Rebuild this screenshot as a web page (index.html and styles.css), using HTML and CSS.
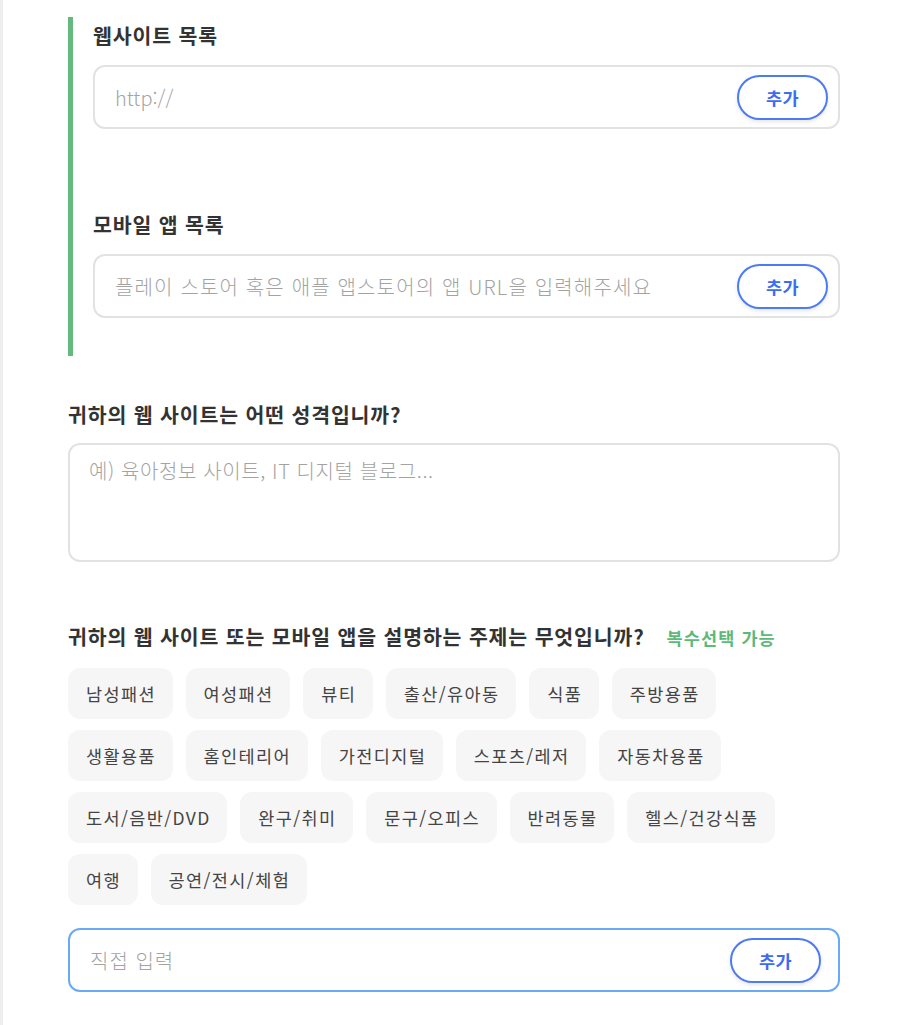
FILE: index.html
```html
<!DOCTYPE html>
<html lang="ko">
<head>
<meta charset="utf-8">
<title>사이트 정보</title>
<link rel="stylesheet" href="styles.css">
</head>
<body>
<div class="page">
  <section class="lists">
    <div class="field-group">
      <h2 class="title">웹사이트 목록</h2>
      <div class="url-field">
        <input class="url-input url-latin" type="text" placeholder="http://">
        <button class="add-btn" type="button">추가</button>
      </div>
    </div>
    <div class="field-group">
      <h2 class="title">모바일 앱 목록</h2>
      <div class="url-field">
        <input class="url-input" type="text" placeholder="플레이 스토어 혹은 애플 앱스토어의 앱 URL을 입력해주세요">
        <button class="add-btn" type="button">추가</button>
      </div>
    </div>
  </section>

  <section class="question q-nature">
    <h2 class="title">귀하의 웹 사이트는 어떤 성격입니까?</h2>
    <textarea class="nature-input" placeholder="예) 육아정보 사이트, IT 디지털 블로그..."></textarea>
  </section>

  <section class="question q-topic">
    <h2 class="title">귀하의 웹 사이트 또는 모바일 앱을 설명하는 주제는 무엇입니까?<span class="multi">복수선택 가능</span></h2>
    <div class="chips">
      <span class="chip">남성패션</span>
      <span class="chip">여성패션</span>
      <span class="chip">뷰티</span>
      <span class="chip">출산/유아동</span>
      <span class="chip">식품</span>
      <span class="chip">주방용품</span>
      <span class="chip">생활용품</span>
      <span class="chip">홈인테리어</span>
      <span class="chip">가전디지털</span>
      <span class="chip">스포츠/레저</span>
      <span class="chip">자동차용품</span>
      <span class="chip">도서/음반/DVD</span>
      <span class="chip">완구/취미</span>
      <span class="chip">문구/오피스</span>
      <span class="chip">반려동물</span>
      <span class="chip">헬스/건강식품</span>
      <span class="chip">여행</span>
      <span class="chip">공연/전시/체험</span>
    </div>
    <div class="url-field direct-field">
      <input class="url-input direct-input" type="text" placeholder="직접 입력">
      <button class="add-btn" type="button">추가</button>
    </div>
  </section>
</div>
</body>
</html>
```

FILE: styles.css
```css
html, body {
  margin: 0;
  padding: 0;
  background: #ffffff;
}

body {
  font-family: "Noto Sans CJK KR", "Noto Sans", sans-serif;
  color: #333333;
}

.page {
  border-left: 3px solid #eeeeee;
  min-height: 1025px;
  box-sizing: border-box;
  padding: 17px 62px 0 65px;
}

.title {
  margin: 0 0 15px 0;
  font-size: 20.5px;
  line-height: 30px;
  font-weight: 700;
  color: #333333;
  letter-spacing: 0.85px;
}

.lists {
  border-left: 5px solid #64b97d;
  padding: 3px 0 38px 20px;
}

.field-group + .field-group {
  margin-top: 80px;
}

.url-field {
  display: flex;
  align-items: center;
  height: 64px;
  box-sizing: border-box;
  border: 2px solid #e2e2e2;
  border-radius: 12px;
  padding: 0 10px 0 20px;
  background: #ffffff;
}

.url-input {
  flex: 1;
  min-width: 0;
  border: none;
  outline: none;
  padding: 0;
  background: transparent;
  font-family: "Noto Sans CJK KR", "Noto Sans", sans-serif;
  font-size: 20px;
  font-weight: 300;
  letter-spacing: 1.15px;
  color: #333333;
}

.url-latin {
  letter-spacing: 0;
}

.direct-input {
  letter-spacing: 1px;
}

.url-input::placeholder,
.nature-input::placeholder {
  color: #a3a3a3;
  opacity: 1;
}

.add-btn {
  flex: none;
  width: 91px;
  height: 45px;
  box-sizing: border-box;
  border: 2px solid #4d7bf4;
  border-radius: 23px;
  background: #ffffff;
  color: #3c6cf0;
  font-family: "Noto Sans CJK KR", "Noto Sans", sans-serif;
  font-size: 17.5px;
  font-weight: 700;
  letter-spacing: 0.5px;
  padding: 0;
  box-shadow: 0 2px 4px rgba(0, 0, 0, 0.10);
  cursor: pointer;
}

.q-nature {
  margin-top: 43px;
}

.q-nature .title {
  margin-bottom: 14px;
}

.nature-input {
  display: block;
  width: 100%;
  height: 119px;
  box-sizing: border-box;
  border: 2px solid #e2e2e2;
  border-radius: 12px;
  padding: 11px 19px;
  resize: none;
  outline: none;
  font-family: "Noto Sans CJK KR", "Noto Sans", sans-serif;
  font-size: 20px;
  font-weight: 300;
  line-height: 30px;
  letter-spacing: 0.6px;
  color: #333333;
}

.q-topic {
  margin-top: 59px;
}

.q-topic .title {
  margin-bottom: 15px;
}

.multi {
  margin-left: 22px;
  font-size: 17.5px;
  font-weight: 700;
  color: #5db97a;
  letter-spacing: 1.1px;
}

.chips {
  display: flex;
  flex-wrap: wrap;
  column-gap: 13px;
  row-gap: 11px;
  width: 720px;
}

.chip {
  display: inline-flex;
  align-items: center;
  height: 51px;
  padding: 0 16.6px 0 18px;
  border-radius: 12px;
  background: #f6f6f6;
  font-size: 17.5px;
  letter-spacing: 1.4px;
  color: #444444;
}

.direct-field {
  margin-top: 23px;
  border-color: #6aa9f4;
  padding-right: 17px;
}
```
